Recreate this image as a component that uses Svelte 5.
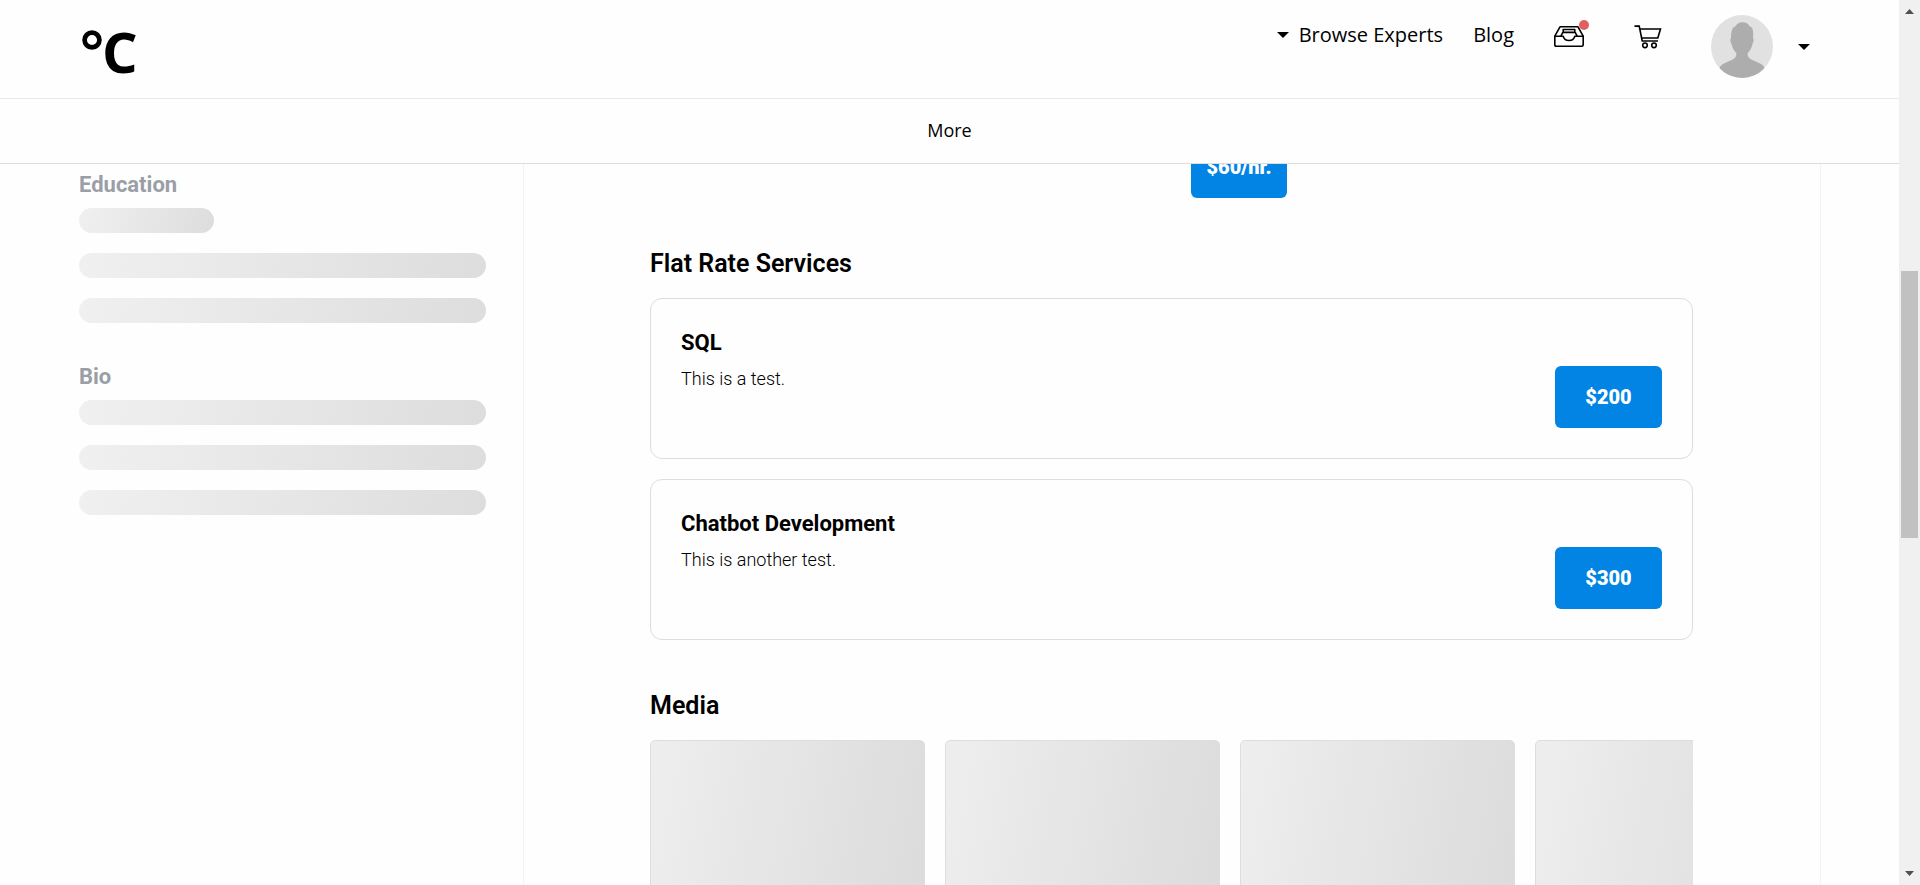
<script>
  const services = [
    { title: 'SQL', text: 'This is a test.', price: '$200' },
    { title: 'Chatbot Development', text: 'This is another test.', price: '$300' }
  ];
  const sections = [
    { title: 'Education', bars: ['short', 'full', 'full'] },
    { title: 'Bio', bars: ['full', 'full', 'full'] }
  ];
  const media = [1, 2, 3, 4];
</script>

<div class="window">
  <div class="page">
    <header>
      <div class="topbar">
        <a class="logo" href="#home">
          <svg width="20" height="20" viewBox="0 0 20 20" fill="none" stroke="#000" stroke-width="4.700"><circle cx="10" cy="10" r="7.400" /></svg>
          <span class="letter">C</span>
        </a>
        <nav>
          <button class="link browse">
            <svg width="12" height="6" viewBox="0 0 12 6" aria-hidden="true"><path d="M0 0h12L6 6z" /></svg>
            Browse Experts
          </button>
          <a class="link blog" href="#blog">Blog</a>
          <button class="icon inbox" aria-label="Inbox">
            <svg width="30" height="21" viewBox="0 0 30 21" fill="none" stroke="#000" stroke-width="1.6" stroke-linejoin="round" stroke-linecap="round">
              <path d="M.8 10.200 6 .8h18l5.200 9.400v8.600q0 1.400-1.400 1.400H2.200Q.8 20.200.8 18.800z" />
              <path d="M.8 10.200H9.200c.5 2.700 3 4.300 5.800 4.300s5.300-1.600 5.800-4.300h8.400" />
              <path d="M7 9.800 8.800 6.400h12.400L23 9.800M9.200 6.400V3.500h11.600v2.900" />
            </svg>
            <span class="dot"></span>
          </button>
          <button class="icon cart" aria-label="Cart">
            <svg width="28" height="24" viewBox="0 0 28 24" fill="none" stroke="#000" stroke-width="1.6">
              <path d="M.5 1.100h4.700L8.200 16H24M5.700 4h20.800l-2.700 9H7.600" />
              <circle cx="11" cy="20.300" r="2.300" />
              <circle cx="20" cy="20.300" r="2.300" />
            </svg>
          </button>
          <button class="icon account" aria-label="Account">
            <svg class="avatar" width="62" height="63" viewBox="0 0 62 63">
              <defs><clipPath id="round"><ellipse cx="31" cy="31.500" rx="31" ry="31.500" /></clipPath></defs>
              <g clip-path="url(#round)">
                <path fill="#e1e1e1" d="M0 0h62v63H0z" />
                <path fill="#adadad" d="M31.500 7.300c-4 0-5.500 1.700-6.800 3.900-3.100.7-4.700 4.300-4.700 12-1.300 1.200-.7 3.900.4 5.400.7 4.400 2.600 7.300 4.900 9.400.4 4-1.300 5.500-6.300 7.700C12.500 48.500 8.500 50.200 8.500 54V63h45v-9c0-3.800-4-5.500-10.500-8.300-5-2.200-6.800-3.700-6.300-7.700 2.300-2.100 4.200-5 4.900-9.400 1.100-1.500 1.700-4.200.4-5.400.8-8-.5-11.300-3.400-12-1.400-2.500-3.400-3.900-7.100-3.900z" />
              </g>
            </svg>
            <svg width="12" height="6" viewBox="0 0 12 6"><path d="M0 0h12L6 6z" /></svg>
          </button>
        </nav>
      </div>
      <div class="subbar"><a class="more" href="#more">More</a></div>
    </header>

    <div class="content">
      <aside>
        {#each sections as section}
          <section>
            <h4>{section.title}</h4>
            {#each section.bars as bar}
              <div class="bar {bar}"></div>
            {/each}
          </section>
        {/each}
      </aside>
      <main>
        <div class="rate"><button class="price narrow">$60/hr.</button></div>
        <h2>Flat Rate Services</h2>
        <div class="cards">
          {#each services as service}
            <article>
              <div>
                <h3>{service.title}</h3>
                <p>{service.text}</p>
              </div>
              <button class="price">{service.price}</button>
            </article>
          {/each}
        </div>
        <h2>Media</h2>
        <div class="media">
          {#each media as item (item)}
            <div class="tile"></div>
          {/each}
        </div>
      </main>
    </div>
  </div>

  <div class="scroll" aria-hidden="true">
    <svg width="9" height="5" viewBox="0 0 9 5"><path d="M0 5h9L4.500 0z" /></svg>
    <div class="track"><div class="thumb"></div></div>
    <svg width="9" height="5" viewBox="0 0 9 5"><path d="M0 0h9L4.500 5z" /></svg>
  </div>
</div>

<style>
  :global(body) {
    background: #fefefe;
    color: #000;
    font-family: Roboto, sans-serif;
  }
  h2, h3, h4, p { margin: 0; }
  button {
    border: 0;
    padding: 0;
    background: none;
    color: inherit;
    font: inherit;
    cursor: pointer;
  }
  a { color: inherit; text-decoration: none; }
  svg { display: block; flex: none; }

  .window { display: flex; height: 100vh; overflow: hidden; }
  .page { flex: 1; min-width: 0; display: flex; flex-direction: column; }

  header {
    position: relative;
    z-index: 1;
    flex: none;
    background: #fefefe;
    font-family: "Open Sans", sans-serif;
    border-bottom: 1px solid #ddd;
  }
  .topbar {
    display: flex;
    justify-content: space-between;
    height: 98px;
    padding: 0 89px 0 82px;
    border-bottom: 1px solid #eaeaea;
  }
  .logo { display: flex; align-items: flex-start; }
  .logo svg { margin-top: 30px; }
  .letter { font-size: 56px; line-height: 76px; font-weight: 700; margin-top: 13px; }
  nav { display: flex; align-items: flex-start; }
  .link { font-size: 20px; line-height: 28px; margin-top: 21px; }
  .browse { display: flex; align-items: center; gap: 10px; }
  .blog { margin-left: 30px; }
  .icon { position: relative; }
  .inbox { margin: 26px 0 0 40px; }
  .dot {
    position: absolute;
    top: -6px;
    right: -5px;
    width: 10px;
    height: 10px;
    border-radius: 50%;
    background: #e06060;
  }
  .cart { margin: 25px 0 0 50px; }
  .account { display: flex; align-items: center; gap: 25px; margin: 15px 0 0 49px; }
  .subbar { display: flex; justify-content: center; align-items: center; height: 62px; padding-bottom: 2px; }
  .more { font-size: 18px; line-height: 24px; }

  .content {
    flex: 1;
    display: grid;
    grid-template-columns: 444px minmax(0, 1fr);
    min-height: 0;
    margin-top: -28px;
    padding: 0 78px 0 79px;
  }
  aside { padding: 34px 37px 0 0; }
  section { margin-bottom: 39px; }
  h4 { font-size: 22px; line-height: 30px; font-weight: 700; color: #9a9ea6; margin-bottom: 8px; }
  .bar {
    height: 25px;
    border-radius: 13px;
    background: linear-gradient(100deg, #f0f0f0, #ddd);
  }
  .bar + .bar { margin-top: 20px; }
  .short { width: 135px; }

  main {
    border-left: 1px solid #f3f3f3;
    border-right: 1px solid #f3f3f3;
    padding: 0 127px 0 126px;
    overflow: hidden;
  }
  .rate { display: flex; justify-content: center; padding-left: 135px; margin-bottom: 50px; }
  .price {
    min-width: 107px;
    height: 62px;
    padding: 0 30px;
    border-radius: 6px;
    background: #0284e4;
    color: #fff;
    font-size: 20px;
    font-weight: 900;
  }
  .narrow { min-width: 0; padding: 0 15px; }
  h2 { font-size: 25px; line-height: 32px; font-weight: 600; margin-bottom: 18px; }
  .cards { display: flex; flex-direction: column; gap: 20px; margin-bottom: 50px; }
  article {
    display: flex;
    justify-content: space-between;
    align-items: flex-end;
    min-height: 99px;
    padding: 30px;
    border: 1px solid #ddd;
    border-radius: 12px;
  }
  article > div { align-self: flex-start; }
  h3 { font-size: 22px; line-height: 28px; font-weight: 700; margin-bottom: 10px; }
  p { font-size: 18px; line-height: 24px; font-weight: 300; }
  .media { display: flex; gap: 20px; overflow: hidden; }
  .tile {
    flex: none;
    box-sizing: border-box;
    width: 275px;
    height: 275px;
    border: 1px solid #dddde0;
    border-radius: 5px;
    background: linear-gradient(100deg, #eee, #dadada);
  }

  .scroll {
    flex: none;
    display: flex;
    flex-direction: column;
    align-items: center;
    width: 21px;
    padding: 9px 0;
    box-sizing: border-box;
    background: #f0f0f0;
    fill: #505050;
  }
  .track { flex: 1; width: 17px; padding-top: 257px; }
  .thumb { height: 267px; background: #c1c1c1; }
</style>
